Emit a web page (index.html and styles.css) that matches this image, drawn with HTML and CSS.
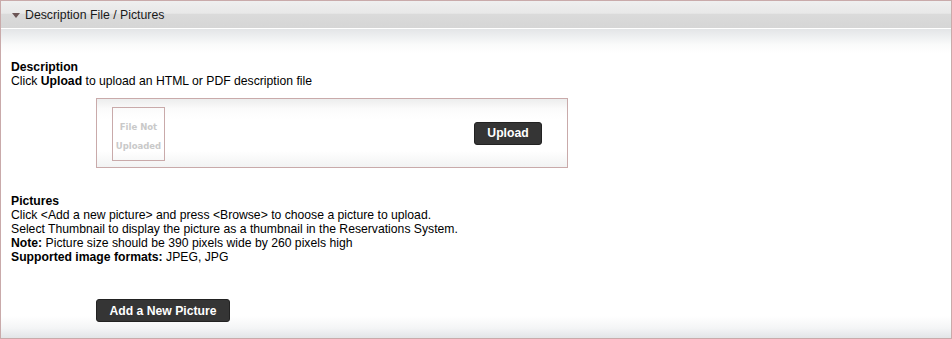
FILE: index.html
```html
<!DOCTYPE html>
<html lang="en">
  <head>
    <meta charset="utf-8" />
    <title>Description File / Pictures</title>
    <link rel="stylesheet" href="styles.css">
  </head>
  <body>
    <div class="panel">
      <div class="panel__header">
        <span class="panel__arrow"></span>
        <span class="panel__title">Description File / Pictures</span>
      </div>

      <div class="panel__body">
        <div class="section section--desc">
          <b>Description</b><br />
          Click <b>Upload</b> to upload an HTML or PDF description file
        </div>

        <div class="upload">
          <div class="upload__thumb">File Not<br />Uploaded</div>
          <button class="btn upload__btn">Upload</button>
        </div>

        <div class="section section--pics">
          <b>Pictures</b><br />
          Click &lt;Add a new picture&gt; and press &lt;Browse&gt; to choose a picture to upload.<br />
          Select Thumbnail to display the picture as a thumbnail in the Reservations System.<br />
          <b>Note:</b> Picture size should be 390 pixels wide by 260 pixels high<br />
          <b>Supported image formats:</b> JPEG, JPG
        </div>

        <div class="pics__actions">
          <button class="btn">Add a New Picture</button>
        </div>
      </div>
    </div>
  </body>
</html>
```

FILE: styles.css
```css
body {
  margin: 0;
  font-family: "Liberation Sans", Arial, sans-serif;
  font-size: 12.2px;
  color: #000;
  background: #fff;
}

.panel {
  width: 950px;
  height: 337px;
  border: 1px solid #c9aaaa;
  display: flex;
  flex-direction: column;
}

.panel__header {
  height: 27px;
  background: linear-gradient(#efefef, #e8e8e8 45%, #dadada 50%, #d6d6d6);
  border-bottom: 1px solid #fff;
  display: flex;
  align-items: center;
  padding-left: 11px;
}

.panel__arrow {
  width: 0;
  height: 0;
  border-left: 4px solid transparent;
  border-right: 4px solid transparent;
  border-top: 5px solid #6b5555;
  margin-right: 5px;
  margin-top: 1px;
}

.panel__title {
  font-size: 12.3px;
  color: #1a1a1a;
}

.panel__body {
  flex: 1;
  background: linear-gradient(#e3e5e7, #fafbfb 16px, #fff 24px, #fff calc(100% - 22px), #f4f5f6 calc(100% - 10px), #e2e5e7);
  padding: 31px 0 0 10px;
}

.section {
  line-height: 14px;
}

.upload {
  margin: 10px 0 0 85px;
  width: 470px;
  height: 68px;
  border: 1px solid #c9aaaa;
  background: linear-gradient(#eceded, #fbfbfb 10px, #fff 20px, #fff 52px, #f2f3f3);
  display: flex;
  align-items: center;
}

.upload__thumb {
  box-sizing: border-box;
  width: 53px;
  height: 54px;
  margin: 2px 0 0 15px;
  padding-top: 10px;
  border: 1px solid #c9aaaa;
  font-family: "DejaVu Sans", Verdana, sans-serif;
  font-size: 8.5px;
  font-weight: bold;
  color: #c9c9c9;
  line-height: 19px;
  text-align: center;
}

.upload__btn {
  margin-left: auto;
  margin-right: 25px;
  width: 68px;
}

.btn {
  height: 23px;
  padding: 0;
  border: 1px solid #222;
  border-radius: 3px;
  background: #353535;
  color: #fff;
  font-family: "Liberation Sans", Arial, sans-serif;
  font-size: 12.2px;
  font-weight: bold;
  white-space: nowrap;
}

.section--pics {
  margin-top: 26px;
}

.pics__actions {
  margin: 35px 0 0 85px;
}

.pics__actions .btn {
  width: 134px;
}
```
